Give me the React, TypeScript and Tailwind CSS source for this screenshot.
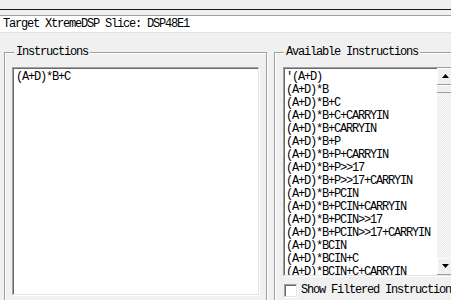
import React from 'react';

const items = [
  "'(A+D)",
  '(A+D)*B',
  '(A+D)*B+C',
  '(A+D)*B+C+CARRYIN',
  '(A+D)*B+CARRYIN',
  '(A+D)*B+P',
  '(A+D)*B+P+CARRYIN',
  '(A+D)*B+P>>17',
  '(A+D)*B+P>>17+CARRYIN',
  '(A+D)*B+PCIN',
  '(A+D)*B+PCIN+CARRYIN',
  '(A+D)*B+PCIN>>17',
  '(A+D)*B+PCIN>>17+CARRYIN',
  '(A+D)*BCIN',
  '(A+D)*BCIN+C',
  '(A+D)*BCIN+C+CARRYIN',
];

const font = "font-['Liberation_Mono',monospace] text-[12px] tracking-[-1.2px] text-black";

// sunken 3d border used by edit boxes and list boxes
const sunken =
  'border-t border-l border-[#a0a0a0] shadow-[inset_1px_1px_0_#696969,1px_1px_0_#fff] border-r border-b border-r-[#e3e3e3] border-b-[#e3e3e3]';

function GroupBox({ title, className, children }: { title: string; className: string; children: React.ReactNode }) {
  return (
    <div className={`relative border border-[#a0a0a0] shadow-[inset_1px_1px_0_#fff,1px_1px_0_#fff] ${className}`}>
      <span className="absolute left-[9px] top-[-8px] bg-[#f0f0f0] px-[2px] leading-[14px]">{title}</span>
      {children}
    </div>
  );
}

export default function App() {
  return (
    <div className={`w-[451px] h-[300px] overflow-hidden bg-[#f0f0f0] ${font}`}>
      {/* window strip */}
      <div className="h-[9px]" />
      <div className="h-px bg-[#1a1a1a]" />
      <div className="h-[5px]" />

      {/* target line */}
      <div className="h-[18px] border-t border-[#a0a0a0] border-b border-b-[#e3e3e3] bg-white pl-[3px] leading-[16px]">
        Target XtremeDSP Slice: DSP48E1
      </div>

      <div className="flex mt-[19px] pl-[4px] gap-[7px]">
        <GroupBox title="Instructions" className="w-[263px] h-[260px] shrink-0 pt-[14px] px-[7px]">
          <div className={`h-[228px] bg-white ${sunken} pl-[3px] pt-[3px] leading-[13px]`}>(A+D)*B+C</div>
        </GroupBox>

        <GroupBox title="Available Instructions" className="w-[200px] h-[260px] shrink-0 pt-[14px] pl-[8px]">
          <div className={`flex w-[172px] h-[209px] bg-white ${sunken}`}>
            <div className="w-[153px] shrink-0 overflow-hidden pl-[2px] pt-[3px]">
              {items.map(it => (
                <div key={it} className="leading-[13px] h-[13px] whitespace-nowrap">
                  {it}
                </div>
              ))}
            </div>
            <div className="w-[17px] flex flex-col shrink-0">
              <div className="h-[17px] bg-[#f0f0f0] border-r border-b border-[#a0a0a0] shadow-[inset_1px_1px_0_#fff] flex items-center justify-center">
                <svg width="7" height="4" viewBox="0 0 7 4">
                  <path d="M3.5 0 L7 4 L0 4 Z" fill="#000" />
                </svg>
              </div>
              <div className="h-[8px] bg-[#f0f0f0] border-b border-[#a0a0a0] shadow-[inset_0_1px_0_#fff]" />
              <div className="flex-1 bg-[repeating-conic-gradient(#e6e6e6_0_25%,#fff_0_50%)] bg-[length:2px_2px]" />
              <div className="h-[17px] bg-[#f0f0f0] border-r border-b border-[#a0a0a0] shadow-[inset_1px_1px_0_#fff] flex items-center justify-center">
                <svg width="7" height="4" viewBox="0 0 7 4">
                  <path d="M0 0 L7 0 L3.5 4 Z" fill="#000" />
                </svg>
              </div>
            </div>
          </div>
          <label className="flex items-center gap-[4px] mt-[8px] pl-[1px]">
            <span className={`w-[13px] h-[13px] shrink-0 bg-white ${sunken}`} />
            <span className="leading-[13px] whitespace-nowrap">Show Filtered Instructions</span>
          </label>
        </GroupBox>
      </div>
    </div>
  );
}
